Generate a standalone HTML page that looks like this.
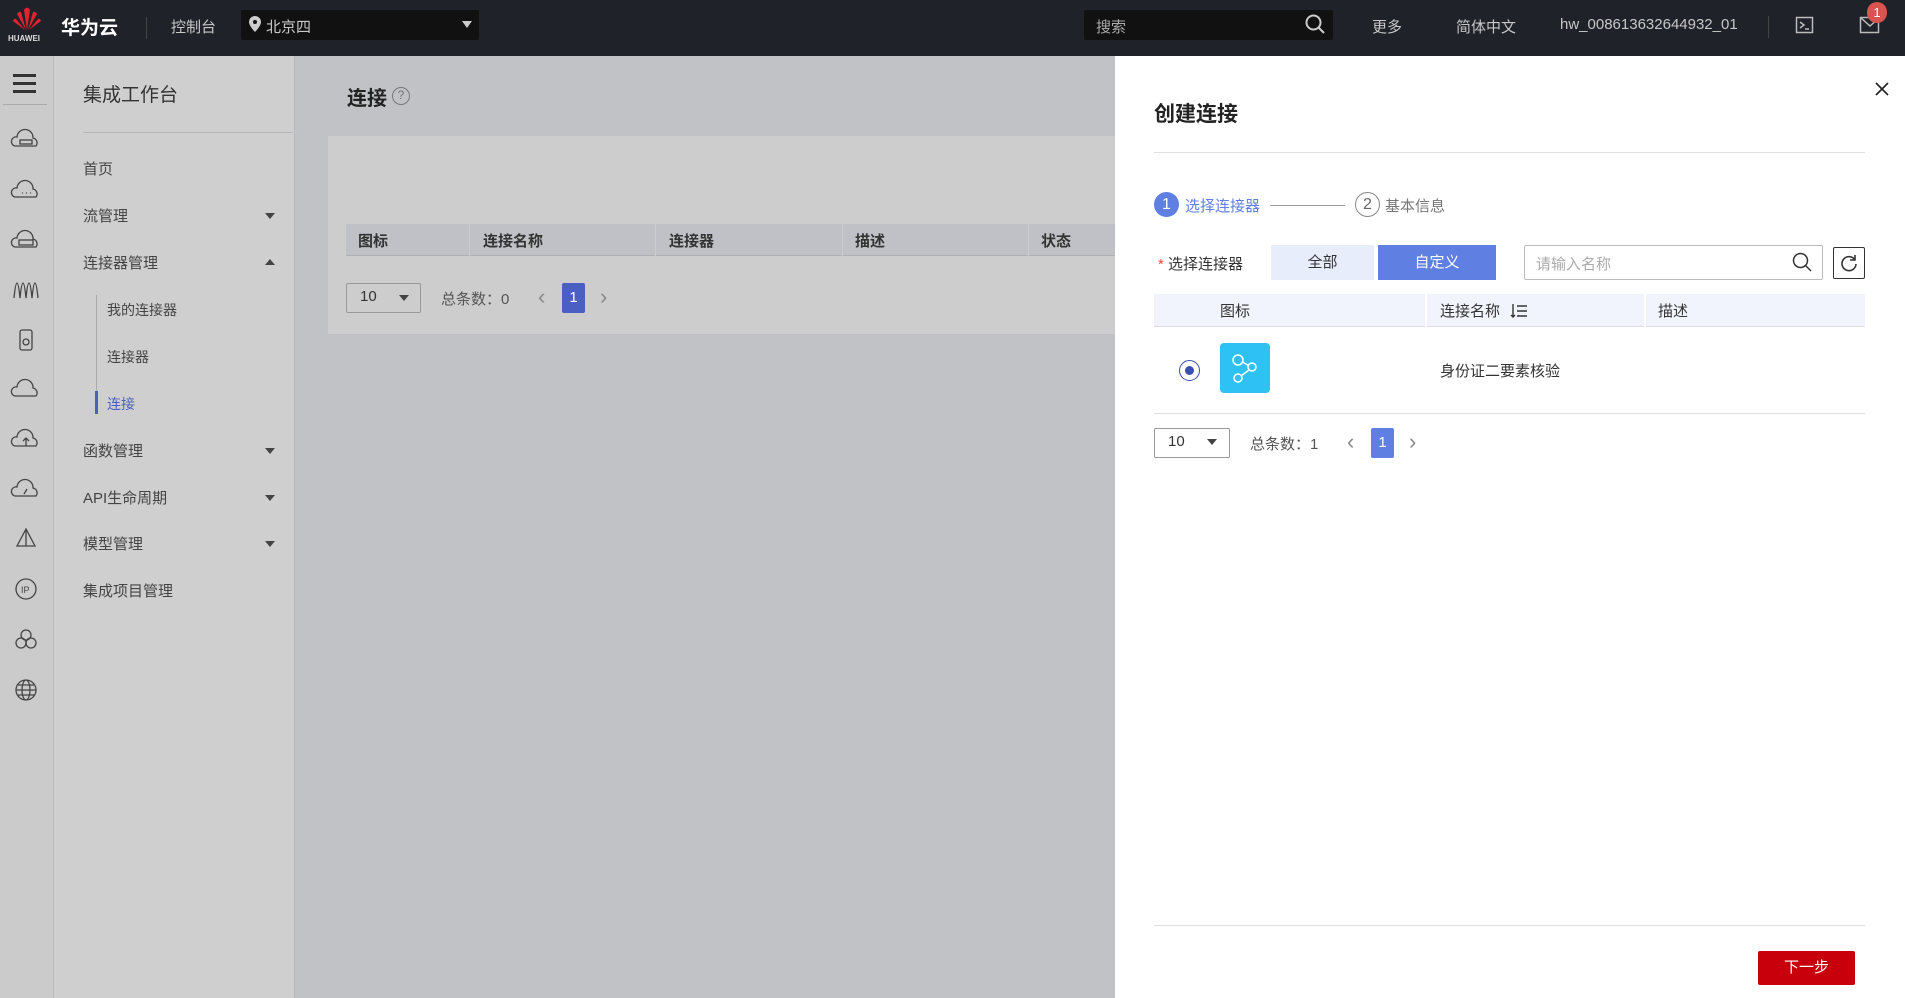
<!DOCTYPE html>
<html><head><meta charset="utf-8"><style>
*{margin:0;padding:0;box-sizing:border-box}
body{width:1905px;height:998px;overflow:hidden;position:relative;font-family:"Liberation Sans","Noto Sans CJK SC",sans-serif;font-size:15px;color:#333;background:#c1c2c6}
.a{position:absolute;white-space:nowrap}
.hdr{left:0;top:0;width:1905px;height:56px;background:#1f2229}
.hdr .t{color:#c8c8c8;font-size:15px;top:16px}
.rail{left:0;top:56px;width:54px;height:942px;background:#cbcbcb;border-right:1px solid #bdbdbd}
.menu{left:54px;top:56px;width:241px;height:942px;background:#cfcfcf;border-right:1px solid #b9b9b9}
.mi{left:83px;font-size:15px;color:#444}
.arr{left:265px;width:0;height:0;border-left:5px solid transparent;border-right:5px solid transparent}
.dn{border-top:6px solid #444}
.up{border-bottom:6px solid #444}
.drawer{left:1115px;top:56px;width:790px;height:942px;background:#fff}
.th{font-size:15px;color:#333;font-weight:bold}
.chev{color:#888;font-size:22px;line-height:22px}
</style></head><body>
<div class="a hdr">
 <svg class="a" style="left:10px;top:6px" width="34" height="26" viewBox="0 0 34 26"><g fill="#e0232e"><path d="M17 24 L14 4 Q16 1 17 2 Z"/><path d="M17 24 L20 4 Q18 1 17 2 Z"/><path d="M16 24 L7 8 Q9 5 11 6 Z"/><path d="M18 24 L27 8 Q25 5 23 6 Z"/><path d="M15 24 L3 15 Q4 12 6 13 Z"/><path d="M19 24 L31 15 Q30 12 28 13 Z"/></g></svg>
 <div class="a" style="left:8px;top:34px;color:#ddd;font-size:8px;font-weight:bold">HUAWEI</div>
 <div class="a" style="left:61px;top:13px;color:#fff;font-size:19px;font-weight:bold">华为云</div>
 <div class="a" style="left:146px;top:17px;width:1px;height:22px;background:#444"></div>
 <div class="a t" style="left:171px">控制台</div>
 <div class="a" style="left:241px;top:10px;width:238px;height:30px;background:#111;border-radius:2px"></div>
 <svg class="a" style="left:249px;top:16px" width="12" height="16" viewBox="0 0 12 16"><path d="M6 0a6 6 0 0 0-6 6c0 4 6 10 6 10s6-6 6-10a6 6 0 0 0-6-6z" fill="#ccc"/><circle cx="6" cy="6" r="2" fill="#111"/></svg>
 <div class="a t" style="left:266px">北京四</div>
 <div class="a" style="left:462px;top:21px;border-left:5px solid transparent;border-right:5px solid transparent;border-top:7px solid #ccc"></div>
 <div class="a" style="left:1084px;top:10px;width:249px;height:30px;background:#111;border-radius:2px"></div>
 <div class="a t" style="left:1096px;color:#aaa">搜索</div>
 <svg class="a" style="left:1305px;top:14px" width="20" height="20" viewBox="0 0 20 20"><circle cx="8.5" cy="8.5" r="7" fill="none" stroke="#ccc" stroke-width="2"/><path d="M13.5 13.5L19 19" stroke="#ccc" stroke-width="2"/></svg>
 <div class="a t" style="left:1372px">更多</div>
 <div class="a t" style="left:1456px">简体中文</div>
 <div class="a t" style="left:1560px">hw_008613632644932_01</div>
 <div class="a" style="left:1768px;top:16px;width:1px;height:22px;background:#444"></div>
 <svg class="a" style="left:1795px;top:15px" width="20" height="20" viewBox="0 0 20 20"><rect x="1.5" y="2.5" width="16" height="15" fill="none" stroke="#bbb" stroke-width="1.5"/><path d="M5 7l4 3-4 3M10 14h4" fill="none" stroke="#bbb" stroke-width="1.5"/></svg>
 <svg class="a" style="left:1859px;top:15px" width="22" height="20" viewBox="0 0 22 20"><rect x="1.5" y="2.5" width="18" height="15" fill="none" stroke="#bbb" stroke-width="1.5"/><path d="M2 3l9 8 9-8" fill="none" stroke="#bbb" stroke-width="1.5"/></svg>
 <div class="a" style="left:1867px;top:2px;width:20px;height:21px;border-radius:10px;background:#d9534f;color:#fff;font-size:13px;text-align:center;line-height:21px">1</div>
</div>

<div class="a rail">
 <div class="a" style="left:13px;top:18px;width:23px;height:3px;background:#333;box-shadow:0 8px 0 #333,0 16px 0 #333"></div>
 <div class="a" style="left:3px;top:48px;width:44px;height:1px;background:#aaa"></div>
</div>
<svg class="a" style="left:0;top:120px" width="54" height="600" viewBox="0 0 54 600" fill="none" stroke="#444" stroke-width="1.3">
 <g transform="translate(26,20)"><path d="M-11 6a4 4 0 0 1 2-9a8 8 0 0 1 16 1a5 5 0 0 1 3 8z"/><rect x="-6" y="0" width="12" height="4"/></g>
 <g transform="translate(26,71)"><path d="M-11 6a4 4 0 0 1 2-9a8 8 0 0 1 16 1a5 5 0 0 1 3 8z"/><path d="M-4 2h1M0 2h1M4 2h1"/></g>
 <g transform="translate(26,121)"><path d="M-11 6a4 4 0 0 1 2-9a8 8 0 0 1 16 1a5 5 0 0 1 3 8z"/><rect x="-7" y="-1" width="14" height="5"/></g>
 <g transform="translate(26,170)"><path d="M-12 8c2-20 4-20 6 0c2-20 4-20 6 0c2-20 4-20 6 0c2-20 4-20 6 0"/></g>
 <g transform="translate(26,220)"><rect x="-6" y="-10" width="12" height="20" rx="2"/><circle cx="0" cy="2" r="3"/></g>
 <g transform="translate(26,270)"><path d="M-11 6a4 4 0 0 1 2-9a8 8 0 0 1 16 1a5 5 0 0 1 3 8z"/></g>
 <g transform="translate(26,320)"><path d="M-11 6a4 4 0 0 1 2-9a8 8 0 0 1 16 1a5 5 0 0 1 3 8z"/><path d="M0 6v-7M-3 1l3-3 3 3"/></g>
 <g transform="translate(26,370)"><path d="M-11 6a4 4 0 0 1 2-9a8 8 0 0 1 16 1a5 5 0 0 1 3 8z"/><path d="M-2 4l3-5"/></g>
 <g transform="translate(26,419)"><path d="M0-10L-9 7h18zM0-10v17"/></g>
 <g transform="translate(26,469)"><circle r="10"/><text x="-5" y="4" font-size="9" fill="#444" stroke="none" font-family="Liberation Sans">IP</text></g>
 <g transform="translate(26,519)"><circle cx="0" cy="-4" r="5"/><circle cx="-5" cy="4" r="5"/><circle cx="5" cy="4" r="5"/></g>
 <g transform="translate(26,570)"><circle r="10"/><ellipse rx="4" ry="10"/><path d="M-10 0h20M-8-5h16M-8 5h16"/></g>
</svg>

<div class="a menu"></div>
<div class="a" style="left:83px;top:80px;font-size:19px;color:#333">集成工作台</div>
<div class="a" style="left:83px;top:132px;width:210px;height:1px;background:#b5b5b8"></div>
<div class="a mi" style="top:158px">首页</div>
<div class="a mi" style="top:205px">流管理</div><div class="a arr dn" style="top:213px"></div>
<div class="a mi" style="top:252px">连接器管理</div><div class="a arr up" style="top:259px"></div>
<div class="a" style="left:96px;top:295px;width:1px;height:119px;background:#aaa"></div>
<div class="a" style="left:95px;top:391px;width:3px;height:23px;background:#4a5fc1"></div>
<div class="a mi" style="left:107px;top:300px;font-size:14px">我的连接器</div>
<div class="a mi" style="left:107px;top:347px;font-size:14px">连接器</div>
<div class="a mi" style="left:107px;top:394px;font-size:14px;color:#4a5fc1">连接</div>
<div class="a mi" style="top:440px">函数管理</div><div class="a arr dn" style="top:448px"></div>
<div class="a mi" style="top:487px">API生命周期</div><div class="a arr dn" style="top:495px"></div>
<div class="a mi" style="top:533px">模型管理</div><div class="a arr dn" style="top:541px"></div>
<div class="a mi" style="top:580px">集成项目管理</div>

<div class="a" style="left:347px;top:82px;font-size:20px;font-weight:bold;color:#222">连接</div>
<div class="a" style="left:392px;top:87px;width:18px;height:18px;border:1.5px solid #777;border-radius:50%;font-size:12px;color:#777;text-align:center;line-height:15px">?</div>
<div class="a" style="left:328px;top:136px;width:787px;height:198px;background:#cdcdcd"></div>
<div class="a" style="left:346px;top:224px;width:769px;height:32px;background:#bfc1c6;border-bottom:1px solid #b0b0b4"></div>
<div class="a th" style="left:358px;top:230px">图标</div>
<div class="a" style="left:469px;top:224px;width:1px;height:32px;background:#ccc"></div>
<div class="a th" style="left:483px;top:230px">连接名称</div>
<div class="a" style="left:655px;top:224px;width:1px;height:32px;background:#ccc"></div>
<div class="a th" style="left:669px;top:230px">连接器</div>
<div class="a" style="left:842px;top:224px;width:1px;height:32px;background:#ccc"></div>
<div class="a th" style="left:855px;top:230px">描述</div>
<div class="a" style="left:1028px;top:224px;width:1px;height:32px;background:#ccc"></div>
<div class="a th" style="left:1041px;top:230px">状态</div>
<div class="a" style="left:346px;top:283px;width:75px;height:30px;border:1px solid #999;border-radius:2px"></div>
<div class="a" style="left:360px;top:288px;font-size:15px">10</div>
<div class="a" style="left:399px;top:295px;border-left:5px solid transparent;border-right:5px solid transparent;border-top:6px solid #444"></div>
<div class="a" style="left:441px;top:288px;color:#555">总条数：0</div>
<div class="a chev" style="left:538px;top:286px">‹</div>
<div class="a" style="left:562px;top:283px;width:23px;height:30px;background:#4a5fc1;color:#fff;text-align:center;line-height:30px;border-radius:2px">1</div>
<div class="a chev" style="left:600px;top:286px">›</div>

<div class="a drawer"></div>
<div class="a" style="left:1154px;top:98px;font-size:21px;font-weight:bold;color:#222">创建连接</div>
<svg class="a" style="left:1875px;top:82px" width="14" height="14" viewBox="0 0 14 14"><path d="M1 1l12 12M13 1L1 13" stroke="#222" stroke-width="1.6"/></svg>
<div class="a" style="left:1154px;top:152px;width:711px;height:1px;background:#e2e2e2"></div>
<div class="a" style="left:1154px;top:192px;width:25px;height:25px;border-radius:50%;background:#5f7fe3;color:#fff;text-align:center;line-height:25px;font-size:16px">1</div>
<div class="a" style="left:1185px;top:195px;color:#5f7fe3;font-size:15px">选择连接器</div>
<div class="a" style="left:1270px;top:205px;width:75px;height:1px;background:#999"></div>
<div class="a" style="left:1355px;top:192px;width:25px;height:25px;border-radius:50%;border:1.3px solid #888;color:#666;text-align:center;line-height:23px;font-size:16px">2</div>
<div class="a" style="left:1385px;top:195px;color:#777;font-size:15px">基本信息</div>
<div class="a" style="left:1158px;top:253px;font-size:15px"><span style="color:#e44">* </span>选择连接器</div>
<div class="a" style="left:1271px;top:245px;width:103px;height:35px;background:#e8edfb;color:#333;text-align:center;line-height:35px">全部</div>
<div class="a" style="left:1378px;top:245px;width:118px;height:35px;background:#5f7fe3;color:#fff;text-align:center;line-height:35px">自定义</div>
<div class="a" style="left:1524px;top:245px;width:299px;height:35px;border:1px solid #bbb;border-radius:2px"></div>
<div class="a" style="left:1536px;top:253px;color:#aaa;font-size:15px">请输入名称</div>
<svg class="a" style="left:1792px;top:252px" width="20" height="20" viewBox="0 0 20 20"><circle cx="8.5" cy="8.5" r="7" fill="none" stroke="#333" stroke-width="1.5"/><path d="M13.5 13.5L19 19" stroke="#333" stroke-width="1.5"/></svg>
<div class="a" style="left:1833px;top:247px;width:32px;height:32px;border:1px solid #333;border-radius:2px"></div>
<svg class="a" style="left:1840px;top:254px" width="18" height="18" viewBox="0 0 18 18"><path d="M15 6A7 7 0 1 0 16 10" fill="none" stroke="#333" stroke-width="1.6"/><path d="M15 1v5h-5" fill="none" stroke="#333" stroke-width="1.6"/></svg>
<div class="a" style="left:1154px;top:294px;width:711px;height:33px;background:#f1f4fc;border-bottom:1px solid #dde"></div>
<div class="a" style="left:1425px;top:294px;width:2px;height:33px;background:#fff"></div>
<div class="a" style="left:1644px;top:294px;width:2px;height:33px;background:#fff"></div>
<div class="a" style="left:1220px;top:300px;font-size:15px;color:#333">图标</div>
<div class="a" style="left:1440px;top:300px;font-size:15px;color:#333">连接名称</div>
<svg class="a" style="left:1510px;top:303px" width="18" height="16" viewBox="0 0 18 16"><path d="M3 1v13M1 12l2 2 2-2M7 3h10M7 8h10M7 13h10" fill="none" stroke="#333" stroke-width="1.4"/></svg>
<div class="a" style="left:1658px;top:300px;font-size:15px;color:#333">描述</div>
<div class="a" style="left:1179px;top:360px;width:21px;height:21px;border-radius:50%;border:1.5px solid #3a4fb0"></div>
<div class="a" style="left:1185px;top:366px;width:9px;height:9px;border-radius:50%;background:#3a4fb0"></div>
<div class="a" style="left:1220px;top:343px;width:50px;height:50px;border-radius:4px;background:#2ec1f3"></div>
<svg class="a" style="left:1220px;top:343px" width="50" height="50" viewBox="0 0 50 50" fill="none" stroke="#fff" stroke-width="1.5"><circle cx="18" cy="17" r="5"/><circle cx="32" cy="24" r="4"/><circle cx="18" cy="35" r="4"/><path d="M22.5 19l6 3.5M29 27l-8 6"/></svg>
<div class="a" style="left:1440px;top:360px;font-size:15px;color:#333">身份证二要素核验</div>
<div class="a" style="left:1154px;top:413px;width:711px;height:1px;background:#e2e2e2"></div>
<div class="a" style="left:1154px;top:428px;width:76px;height:30px;border:1px solid #999;border-radius:2px"></div>
<div class="a" style="left:1168px;top:433px;font-size:15px">10</div>
<div class="a" style="left:1207px;top:439px;border-left:5px solid transparent;border-right:5px solid transparent;border-top:6px solid #444"></div>
<div class="a" style="left:1250px;top:433px;color:#555">总条数：1</div>
<div class="a chev" style="left:1347px;top:431px">‹</div>
<div class="a" style="left:1371px;top:428px;width:23px;height:30px;background:#5f7fe3;color:#fff;text-align:center;line-height:30px;border-radius:2px">1</div>
<div class="a chev" style="left:1409px;top:431px">›</div>
<div class="a" style="left:1154px;top:925px;width:711px;height:1px;background:#e2e2e2"></div>
<div class="a" style="left:1758px;top:951px;width:97px;height:34px;background:#c7000b;color:#fff;text-align:center;line-height:34px;border-radius:2px">下一步</div>
</body></html>
